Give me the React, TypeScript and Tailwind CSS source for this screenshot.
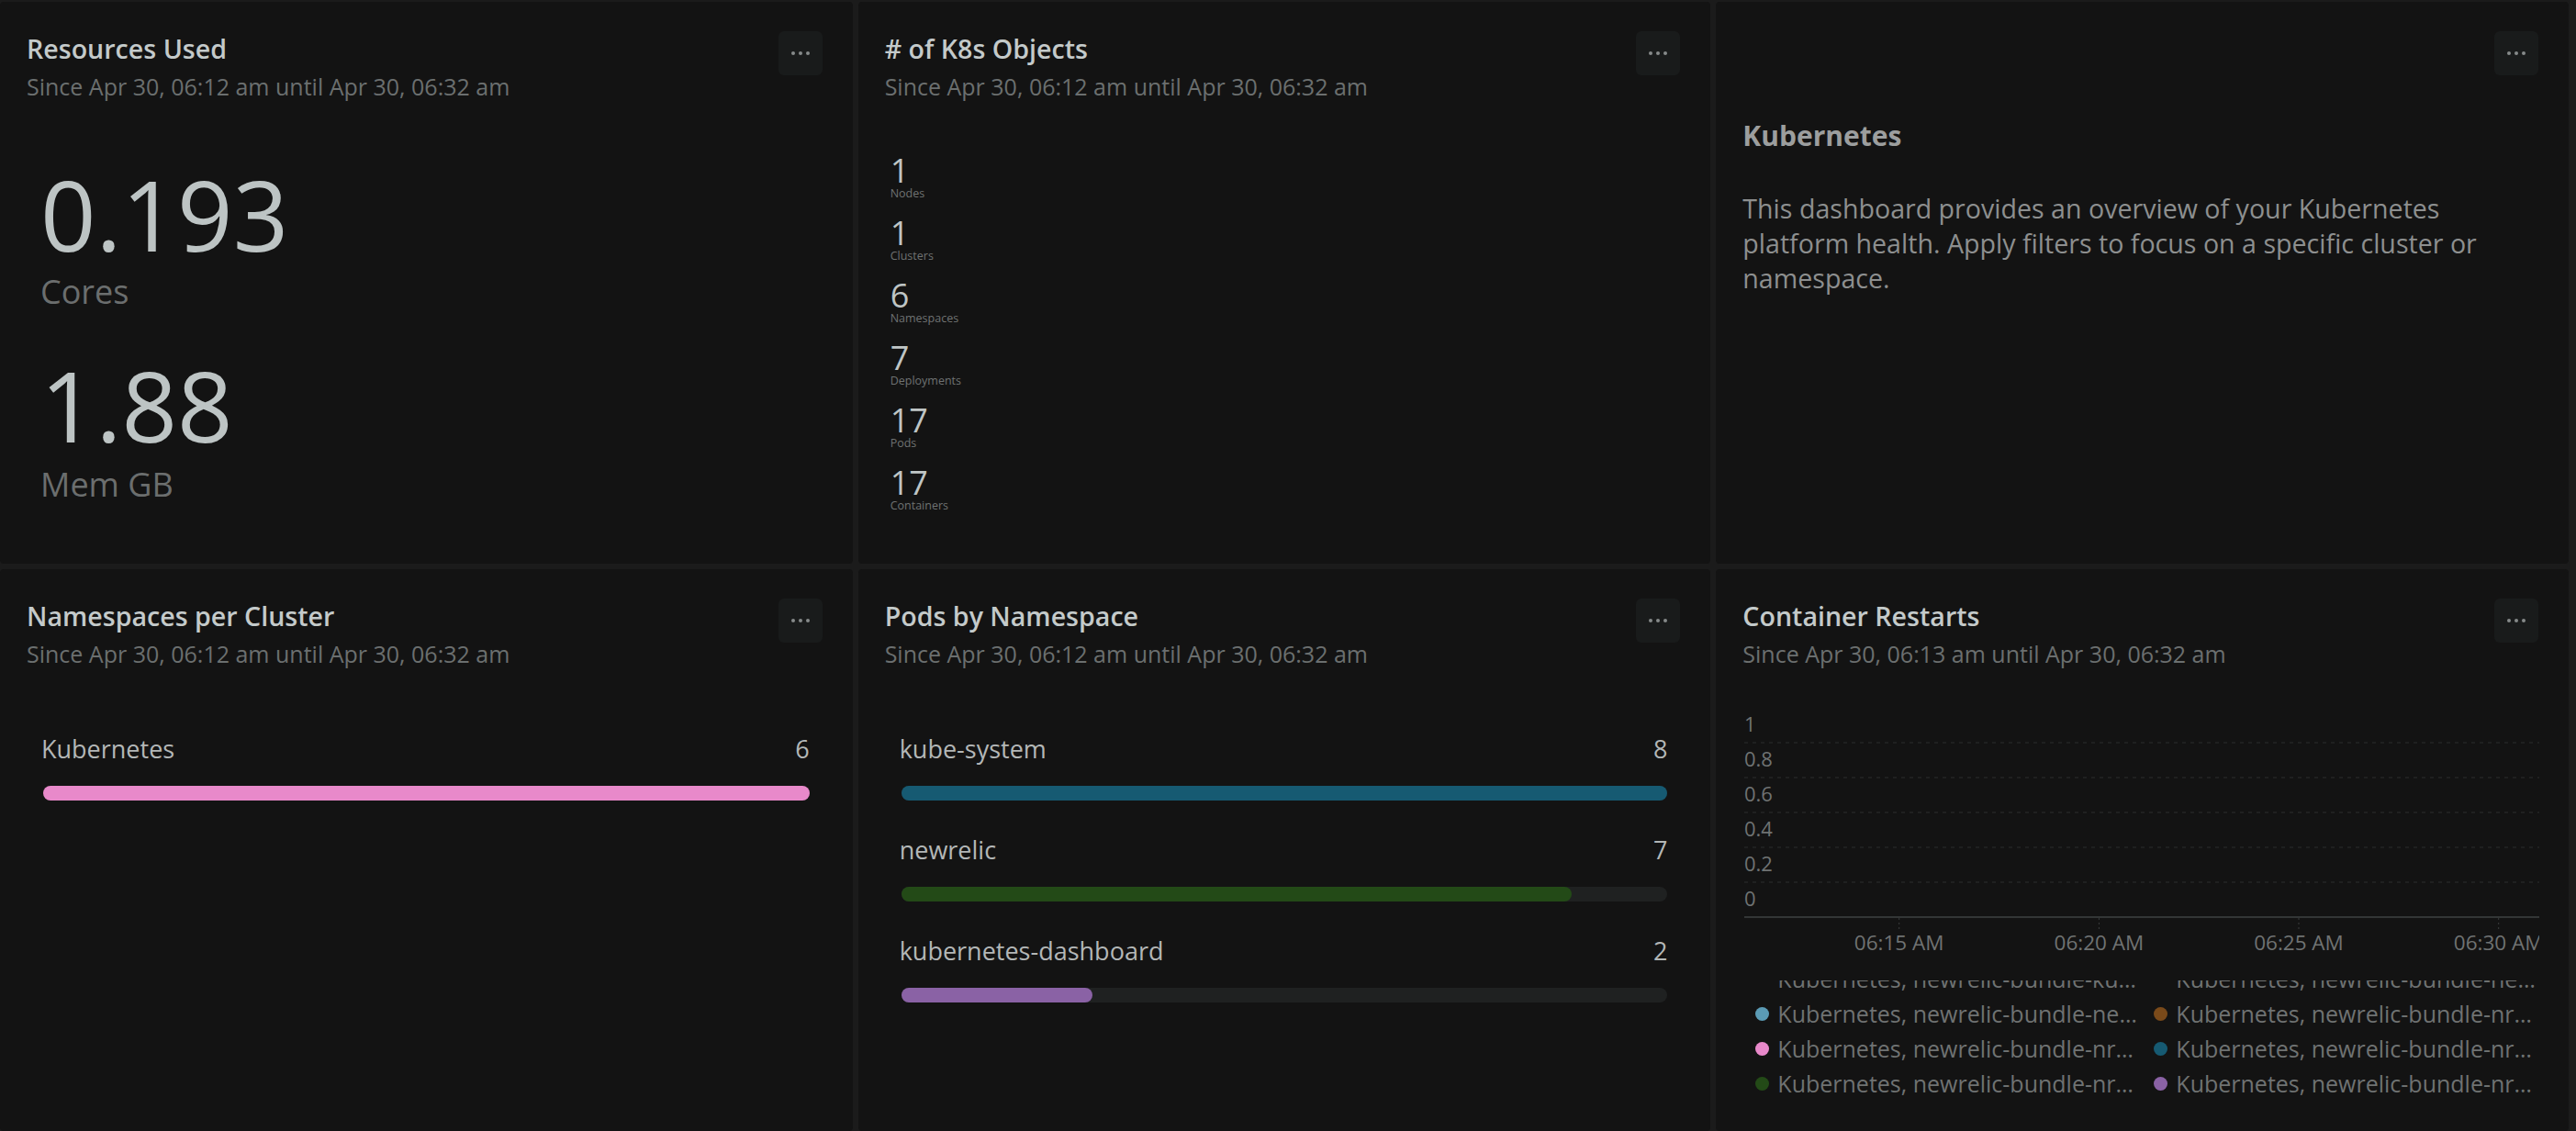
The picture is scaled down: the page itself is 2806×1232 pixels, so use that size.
import React from 'react';

type Bar = { name: string; value: number; color: string };
type Legend = { name: string; color: string };

const k8sObjects = [
  { value: 1, label: 'Nodes' },
  { value: 1, label: 'Clusters' },
  { value: 6, label: 'Namespaces' },
  { value: 7, label: 'Deployments' },
  { value: 17, label: 'Pods' },
  { value: 17, label: 'Containers' },
];

const clusterBars: Bar[] = [{ name: 'Kubernetes', value: 6, color: 'bg-[#e889ca]' }];

const podBars: Bar[] = [
  { name: 'kube-system', value: 8, color: 'bg-[#165a72]' },
  { name: 'newrelic', value: 7, color: 'bg-[#234a17]' },
  { name: 'kubernetes-dashboard', value: 2, color: 'bg-[#8a62a5]' },
];

// first row is scrolled out of view, only the bottom of its text shows
const legendItems: Legend[] = [
  { name: 'Kubernetes, newrelic-bundle-kube-state-metrics', color: 'bg-transparent' },
  { name: 'Kubernetes, newrelic-bundle-newrelic-logging', color: 'bg-transparent' },
  { name: 'Kubernetes, newrelic-bundle-newrelic-infrastructure', color: 'bg-[#5b9bb5]' },
  { name: 'Kubernetes, newrelic-bundle-nrk8s-controlplane', color: 'bg-[#7a4a1a]' },
  { name: 'Kubernetes, newrelic-bundle-nrk8s-kubelet', color: 'bg-[#e889ca]' },
  { name: 'Kubernetes, newrelic-bundle-nrk8s-ksm', color: 'bg-[#165a72]' },
  { name: 'Kubernetes, newrelic-bundle-nrk8s-scheduler', color: 'bg-[#234a17]' },
  { name: 'Kubernetes, newrelic-bundle-nrk8s-etcd', color: 'bg-[#8a62a5]' },
];

const MoreButton = () => (
  <button className="w-[48px] h-[48px] shrink-0 rounded-[6px] bg-[#191b1b] flex items-center justify-center gap-[4px]">
    <span className="w-[4px] h-[4px] rounded-full bg-[#868a8a]" />
    <span className="w-[4px] h-[4px] rounded-full bg-[#868a8a]" />
    <span className="w-[4px] h-[4px] rounded-full bg-[#868a8a]" />
  </button>
);

const Panel: React.FC<{ title?: string; subtitle?: string; children: React.ReactNode }> = ({ title, subtitle, children }) => (
  <section className="h-[612px] bg-[#131313] rounded-[4px] overflow-hidden flex flex-col">
    <header className="flex items-start justify-between pl-[29px] pr-[33px] pt-[32px]">
      {title ? (
        <div className="pt-[1px] min-w-0">
          <h2 className="text-[28.6px] leading-[36px] font-semibold text-[#c4caca]">{title}</h2>
          <p className="mt-[7px] text-[25px] leading-[32px] text-[#6b6f6f]">{subtitle}</p>
        </div>
      ) : (
        <div />
      )}
      <MoreButton />
    </header>
    {children}
  </section>
);

const BarList: React.FC<{ bars: Bar[] }> = ({ bars }) => {
  const max = Math.max(...bars.map(b => b.value));
  return (
    <div className="mt-[70px] px-[47px] flex flex-col gap-[36px]">
      {bars.map(bar => (
        <div key={bar.name}>
          <div className="flex justify-between text-[27px] leading-[36px] text-[#b3b7b7]">
            <span className="-ml-[2px]">{bar.name}</span>
            <span>{bar.value}</span>
          </div>
          <div className="mt-[22px] h-[16px] rounded-full bg-[#1f2121]">
            <div className={`h-full rounded-full ${bar.color}`} style={{ width: `${(bar.value / max) * 100}%` }} />
          </div>
        </div>
      ))}
    </div>
  );
};

const RestartsChart = () => {
  const yTicks = ['1', '0.8', '0.6', '0.4', '0.2', '0'];
  const xTicks = [
    { x: 168.7, label: '06:15 AM' },
    { x: 386.4, label: '06:20 AM' },
    { x: 604, label: '06:25 AM' },
    { x: 821.7, label: '06:30 AM' },
  ];
  return (
    <svg className="mt-[42px] ml-[31px] shrink-0" width="866" height="298">
      {yTicks.map((t, i) => (
        <g key={t}>
          <text x="0" y={27 + i * 38} fontSize="22" fill="#6f7272">{t}</text>
          {i < 5 && (
            <line x1="0" x2="866" y1={39 + i * 38} y2={39 + i * 38} stroke="#2c2f2f" strokeWidth="1" strokeDasharray="4 5" />
          )}
        </g>
      ))}
      <line x1="0" x2="866" y1="229" y2="229" stroke="#333636" strokeWidth="2" />
      {xTicks.map(t => (
        <g key={t.label}>
          <line x1={t.x} x2={t.x} y1="230" y2="243" stroke="#3a3d3d" strokeWidth="1" strokeDasharray="2 3" />
          <text x={t.x} y="265" fontSize="22.5" fill="#6f7272" textAnchor="middle">{t.label}</text>
        </g>
      ))}
    </svg>
  );
};

export default function App() {
  return (
    <div className="w-[2806px] h-[1232px] overflow-hidden bg-[#1b1b1b] pt-[2px] pr-[8px] font-['Open_Sans',sans-serif]">
      <div className="grid grid-cols-3 gap-[6px]">
        <Panel title="Resources Used" subtitle="Since Apr 30, 06:12 am until Apr 30, 06:32 am">
          <div className="mt-[70px] pl-[44px] flex flex-col">
            <div className="text-[106px] leading-[107px] text-[#bdc4c4]">0.193</div>
            <div className="mt-[13px] text-[36px] leading-[36px] text-[#6b6e6e]">Cores</div>
            <div className="mt-[52px] text-[106px] leading-[107px] text-[#bdc4c4]">1.88</div>
            <div className="mt-[15px] text-[36px] leading-[36px] text-[#6b6e6e]">Mem GB</div>
          </div>
        </Panel>

        <Panel title="# of K8s Objects" subtitle="Since Apr 30, 06:12 am until Apr 30, 06:32 am">
          <div className="mt-[58px] pl-[35px] flex flex-col gap-[18px]">
            {k8sObjects.map(o => (
              <div key={o.label}>
                <div className="text-[36px] leading-[36px] text-[#bfc5c5]">{o.value}</div>
                <div className="text-[12.5px] leading-[14px] text-[#6f7272]">{o.label}</div>
              </div>
            ))}
          </div>
        </Panel>

        <Panel>
          <div className="mt-[46px] pl-[29px] pr-[33px]">
            <h3 className="text-[30px] leading-[40px] font-bold text-[#9c9e9e]">Kubernetes</h3>
            <p className="mt-[40px] text-[28.6px] leading-[38px] text-[#8d8f8f]">
              This dashboard provides an overview of your Kubernetes platform health. Apply filters to focus on a specific cluster or namespace.
            </p>
          </div>
        </Panel>

        <Panel title="Namespaces per Cluster" subtitle="Since Apr 30, 06:12 am until Apr 30, 06:32 am">
          <BarList bars={clusterBars} />
        </Panel>

        <Panel title="Pods by Namespace" subtitle="Since Apr 30, 06:12 am until Apr 30, 06:32 am">
          <BarList bars={podBars} />
        </Panel>

        <Panel title="Container Restarts" subtitle="Since Apr 30, 06:13 am until Apr 30, 06:32 am">
          <RestartsChart />
          <div className="flex-1 overflow-hidden ml-[43px]">
            <div className="-mt-[21px] grid grid-cols-[434px_434px]">
              {legendItems.map(item => (
                <div key={item.name} className="h-[38px] flex items-center gap-[9px] pr-[14px] min-w-0">
                  <span className={`w-[15px] h-[15px] shrink-0 rounded-full ${item.color}`} />
                  <span className="truncate text-[25px] leading-[38px] text-[#6f7272]">{item.name}</span>
                </div>
              ))}
            </div>
          </div>
        </Panel>
      </div>
    </div>
  );
}
